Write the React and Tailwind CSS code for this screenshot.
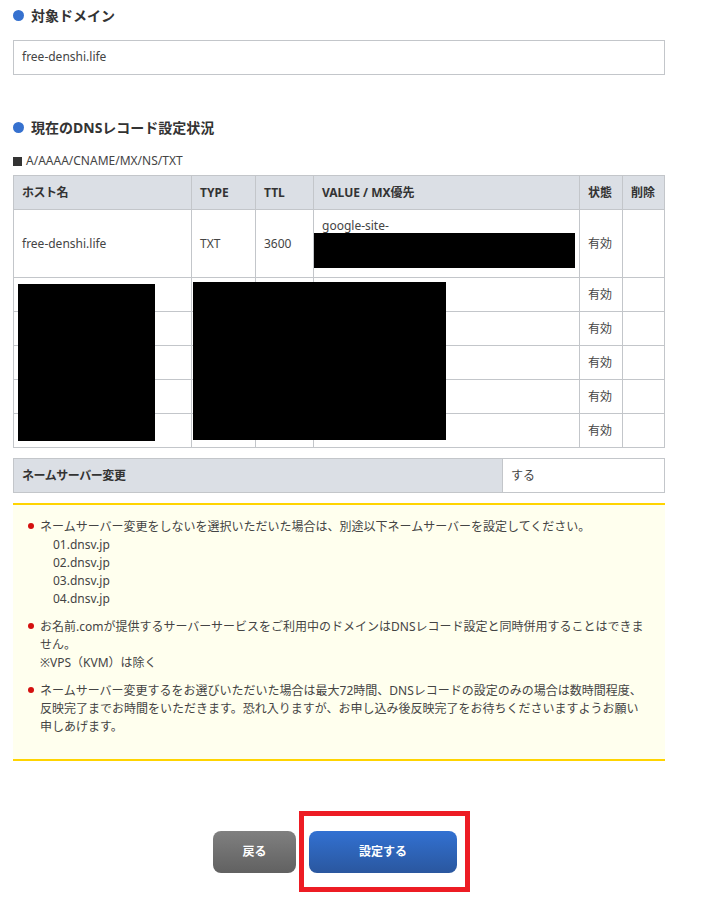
const Heading = ({ children, className }) => (
  <h2 className={`flex items-center gap-[7px] text-[14px] leading-[20px] font-bold text-[#333] ${className}`}>
    <span className="w-[11px] h-[11px] rounded-full bg-[#3671cf] -mt-[2px]" />
    {children}
  </h2>
)

const th = 'border border-[#c3c6ca] bg-[#dbdfe5] px-2 text-left text-[12px] font-bold text-[#333]'
const td = 'border border-[#c3c6ca] px-2 text-[12px] text-[#444]'

const notes = [
  {
    top: 'mt-[13px]',
    lines: ['ネームサーバー変更をしないを選択いただいた場合は、別途以下ネームサーバーを設定してください。'],
    hosts: ['01.dnsv.jp', '02.dnsv.jp', '03.dnsv.jp', '04.dnsv.jp'],
  },
  {
    top: 'mt-[10px]',
    lines: ['お名前.comが提供するサーバーサービスをご利用中のドメインはDNSレコード設定と同時併用することはできません。', '※VPS（KVM）は除く'],
  },
  {
    top: 'mt-[10px]',
    lines: ['ネームサーバー変更するをお選びいただいた場合は最大72時間、DNSレコードの設定のみの場合は数時間程度、反映完了までお時間をいただきます。恐れ入りますが、お申し込み後反映完了をお待ちくださいますようお願い申しあげます。'],
  },
]

export default function App() {
  return (
    <div className="relative w-[710px] h-[914px] bg-white overflow-hidden font-['Noto_Sans','Noto_Sans_CJK_JP',sans-serif] text-[#444]">
      <div className="w-[652px] ml-[13px] pt-[6px]">
        <Heading>対象ドメイン</Heading>

        <div className="mt-[14px] h-[35px] border border-[#c3c6ca] px-2 pb-[2px] flex items-center text-[12px]">free-denshi.life</div>

        <Heading className="mt-[43px]">現在のDNSレコード設定状況</Heading>

        <p className="mt-[14px] h-[18px] flex items-center gap-[4px] text-[12px] leading-[18px] text-[#444]">
          <span className="w-[9px] h-[9px] bg-[#333]" />
          A/AAAA/CNAME/MX/NS/TXT
        </p>

        <table className="mt-[5px] w-[651px] table-fixed border-collapse">
          <colgroup>
            <col className="w-[178px]" />
            <col className="w-[64px]" />
            <col className="w-[58px]" />
            <col className="w-[266px]" />
            <col className="w-[43px]" />
            <col className="w-[42px]" />
          </colgroup>
          <thead>
            <tr className="h-[34px]">
              <th className={`${th} tracking-[-0.5px]`}>ホスト名</th>
              <th className={th}>TYPE</th>
              <th className={th}>TTL</th>
              <th className={th}>VALUE / MX優先</th>
              <th className={th}>状態</th>
              <th className={th}>削除</th>
            </tr>
          </thead>
          <tbody>
            <tr className="h-[68px]">
              <td className={td}>free-denshi.life</td>
              <td className={td}>TXT</td>
              <td className={td}>3600</td>
              <td className={`${td} align-top pt-[7px] leading-[18px]`}>google-site-</td>
              <td className={td}>有効</td>
              <td className={td}></td>
            </tr>
            {[0, 1, 2, 3, 4].map(i => (
              <tr key={i} className="h-[34px]">
                <td className={td}></td>
                <td className={td}></td>
                <td className={td}></td>
                <td className={td}></td>
                <td className={td}>有効</td>
                <td className={td}></td>
              </tr>
            ))}
          </tbody>
        </table>

        <div className="mt-[10px] h-[35px] flex border border-[#c3c6ca] text-[12px]">
          <div className="w-[489px] bg-[#dbdfe5] border-r border-[#c3c6ca] px-2 flex items-center font-bold text-[#333] tracking-[-0.45px]">ネームサーバー変更</div>
          <div className="flex-1 px-2 flex items-center">する</div>
        </div>

        <div className="mt-[10px] h-[258px] bg-[#ffffee] border-y-2 border-[#ffd400] pl-[14px] pr-[16px] text-[12px] leading-[18px]">
          {notes.map((n, i) => (
            <div key={i} className={`relative pl-[13px] ${n.top}`}>
              <span className="absolute left-[1px] top-[5px] w-[6px] h-[6px] rounded-full bg-[#d4100f]" />
              {n.lines.map(l => <p key={l}>{l}</p>)}
              {n.hosts && n.hosts.map(h => <p key={h} className="pl-[13px]">{h}</p>)}
            </div>
          ))}
        </div>

        <div className="mt-[70px] pr-[8px] flex justify-center gap-[13px] text-[12px] font-bold text-white">
          <button className="w-[83px] h-[42px] rounded-[8px] bg-gradient-to-b from-[#808080] to-[#616161] font-bold">戻る</button>
          <button className="w-[148px] h-[42px] rounded-[8px] bg-gradient-to-b from-[#3271d2] to-[#2a579f] font-bold">設定する</button>
        </div>
      </div>

      {/* redactions */}
      <div className="absolute left-[314px] top-[233px] w-[261px] h-[35px] bg-black" />
      <div className="absolute left-[18px] top-[284px] w-[137px] h-[157px] bg-black" />
      <div className="absolute left-[193px] top-[282px] w-[253px] h-[158px] bg-black" />

      {/* red frame */}
      <div className="absolute left-[299px] top-[811px] w-[171px] h-[81px] border-[5px] border-[#ed1c24]" />
    </div>
  )
}
